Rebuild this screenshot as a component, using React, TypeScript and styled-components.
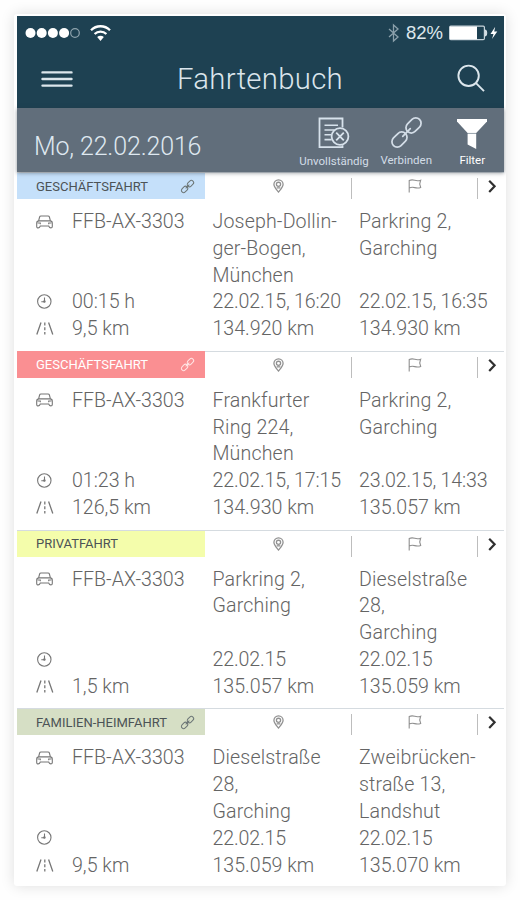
import React from "react";
import styled, { createGlobalStyle } from "styled-components";

const GlobalStyle = createGlobalStyle`
  * { box-sizing: border-box; }
  html, body { margin: 0; background: #fefefe; }
  body { font-family: Roboto, "Liberation Sans", sans-serif; font-weight: 300; }
  svg { display: block; flex: none; overflow: visible; }
`;

const Page = styled.div`
  height: 900px;
  padding: 14px;
  overflow: hidden;
`;

const Card = styled.main`
  width: 492px;
  height: 872px;
  padding: 2px 2px 0 3px;
  background: #fff;
  border-radius: 3px;
  box-shadow: 0 0 14px rgba(0, 0, 0, 0.13);
  overflow: hidden;
`;

const Header = styled.header`
  height: 92px;
  background: #1e4152;
  color: #dbe5ec;
`;

const StatusBar = styled.div`
  height: 33px;
  padding: 0 6px 0 8px;
  display: flex;
  justify-content: space-between;
  align-items: center;
`;

const StatusGroup = styled.div<{ $gap: number }>`
  display: flex;
  align-items: center;
  gap: ${(p) => p.$gap}px;
`;

const Percent = styled.span`
  font-family: "Liberation Sans", sans-serif;
  font-size: 18.5px;
  line-height: 20px;
  margin: 0 -1px 0 0;
  color: #dfe8ed;
`;

const TitleBar = styled.div`
  height: 59px;
  padding: 0 18px 0 24px;
  display: grid;
  grid-template-columns: 32px 1fr 30px;
  align-items: center;
`;

const Title = styled.h1`
  margin: 0 9px 0 0;
  font-size: 29.3px;
  line-height: 34px;
  font-weight: 300;
  letter-spacing: 0.3px;
  text-align: center;
`;

const Toolbar = styled.div`
  position: relative;
  z-index: 1;
  height: 64px;
  padding-left: 17px;
  display: flex;
  justify-content: space-between;
  background: #616e7b;
  color: #dfe8f0;
  box-shadow: 0 1px 4px rgba(40, 50, 60, 0.5);
`;

const DateLabel = styled.div`
  padding-top: 23px;
  font-size: 25px;
  line-height: 31px;
  letter-spacing: -0.15px;
`;

const Actions = styled.div`
  display: grid;
  grid-template-columns: 76px 68.5px 63.5px;
  padding-top: 9px;
`;

const Action = styled.div<{ $strong?: boolean }>`
  display: flex;
  flex-direction: column;
  align-items: center;
  gap: ${(p) => (p.$strong ? 4 : 5)}px;
  font-size: 11.5px;
  line-height: 14px;
  font-weight: 400;
  white-space: nowrap;
  color: ${(p) => (p.$strong ? "#fff" : "#d3dde7")};
`;

const Trip = styled.section`
  height: 178.8px;
  border-top: 1.5px solid #d5dbe0;
`;

const TripHeader = styled.div`
  height: 26px;
  display: grid;
  grid-template-columns: 188px 147px 126px 26px;
  color: #909090;
`;

const Tag = styled.div<{ $bg: string; $light?: boolean }>`
  display: flex;
  align-items: center;
  justify-content: space-between;
  margin-top: ${(p) => (p.$light ? -1 : 0)}px;
  padding: 0 11px 0 19px;
  background: ${(p) => p.$bg};
  color: ${(p) => (p.$light ? "#fff" : "#4c5356")};
  font-size: 13px;
  font-weight: 400;

  svg {
    color: ${(p) => (p.$light ? "#ffe3e3" : "#6d7777")};
  }
`;

const HeadCell = styled.div<{ $line?: boolean }>`
  display: flex;
  justify-content: center;
  padding: 6px 0 0 ${(p) => (p.$line ? 0 : 1)}px;
  background: ${(p) => (p.$line ? "linear-gradient(#bdbdbd, #bdbdbd) right 5px / 1px 21px no-repeat" : "none")};
`;

const TripBody = styled.div`
  display: grid;
  grid-template-columns: 36px 140.5px 146.5px 1fr;
  grid-template-rows: 80.4px 26.8px 26.8px;
  padding: 10px 0 0 19px;
  font-size: 19.6px;
  line-height: 26.8px;
  color: #646464;
`;

const Cell = styled.div<{ $spacing?: number }>`
  letter-spacing: ${(p) => p.$spacing ?? 0}px;
  white-space: pre;
`;

const IconCell = styled.div`
  height: 25.4px;
  display: flex;
  align-items: center;
  color: #777;
`;

const Signal = () => (
  <svg width="55" height="12" viewBox="0 0 55 12" fill="#fff">
    {[5.5, 16.7, 27.9, 39.1].map((x) => (
      <circle key={x} cx={x} cy="6" r="5" />
    ))}
    <circle cx="50" cy="6" r="4.3" fill="none" stroke="#8fa3ad" strokeWidth="1.2" />
  </svg>
);

const Wifi = () => (
  <svg width="21" height="18" viewBox="0 0 21 18" fill="none" stroke="#fff" strokeWidth="2.3">
    <path d="M1 6.2a13.4 13.4 0 0 1 19 0" />
    <path d="M4.6 10a8.4 8.4 0 0 1 11.8 0" />
    <path d="M7.2 13.1a4.7 4.7 0 0 1 6.6 0L10.5 17z" fill="#fff" stroke="none" />
  </svg>
);

const Bluetooth = () => (
  <svg width="11" height="18" viewBox="0 0 11 18" fill="none" stroke="#8ba0ab" strokeWidth="1.3">
    <path d="M1 5l9 8-4.5 4V1L10 5l-9 8" />
  </svg>
);

const Battery = () => (
  <svg width="49" height="16" viewBox="0 0 49 16">
    <rect x="0.6" y="1.1" width="34.8" height="13.6" rx="1.2" fill="none" stroke="#c7d3da" strokeWidth="1.2" />
    <rect x="1" y="1.5" width="27" height="12.8" fill="#fff" />
    <path d="M36.4 4.8c1.8.9 1.8 5.5 0 6.4z" fill="#dce5ea" stroke="#dce5ea" />
    <path d="M46.2 1.8L41.5 9h3L43 14l5.3-7.4h-3.1z" fill="#fff" />
  </svg>
);

const Menu = () => (
  <svg width="32" height="18" viewBox="0 0 32 18" stroke="#dce6ec" strokeWidth="2.4" strokeLinecap="round">
    <path d="M1.5 2.4h29M1.5 9h29M1.5 15.6h29" />
  </svg>
);

const Search = () => (
  <svg width="28" height="28" viewBox="0 0 28 28" fill="none" stroke="#dce6ec" strokeWidth="1.9">
    <circle cx="12.6" cy="10.8" r="10.2" />
    <path d="M20 18.2l8 8" />
  </svg>
);

const Incomplete = () => (
  <svg width="32" height="32" viewBox="0 0 32 32" fill="none" stroke="#d7e2ec" strokeWidth="1.8">
    <path d="M24.5 10.5V1.5H1.5V30.2h23v-2" />
    <path d="M6.5 8.2h13.5M6.5 13h10M6.5 17.8h6.5M6.5 22.6h7" strokeWidth="1.6" />
    <circle cx="22" cy="19.5" r="8.4" />
    <path d="M18.2 15.7l7.6 7.6M25.8 15.7l-7.6 7.6" />
  </svg>
);

const Chain = ({ size, weight }: { size: number; weight: number }) => (
  <svg width={size} height={size} viewBox="0 0 32 32" fill="none" stroke="currentColor" strokeWidth={weight} strokeLinecap="round">
    <g transform="rotate(-45 16 16)">
      <rect x="-3" y="10.5" width="17.5" height="11" rx="5.5" />
      <rect x="17.5" y="10.5" width="17.5" height="11" rx="5.5" />
      <path d="M10.500 16h11" />
    </g>
  </svg>
);

const Funnel = () => (
  <svg width="30" height="32" viewBox="0 0 30 32">
    <path d="M0 2h30v2.5L19.2 16H10.6L0 4.5z" fill="#fff" />
    <path d="M10.6 17h8.6v15l-8.6-4.6z" fill="#fff" />
    <path d="M10.6 16.4h8.6" stroke="#aeb8c1" strokeWidth="0.9" />
  </svg>
);

const Pin = () => (
  <svg width="11" height="14" viewBox="0 0 12 15" fill="none" stroke="currentColor" strokeWidth="1.4">
    <path d="M6 14C3.6 11.2 1 8.8 1 5.7a5 5 0 0 1 10 0C11 8.8 8.4 11.2 6 14z" />
    <circle cx="6" cy="5.7" r="2.3" />
    <path d="M4 9.5h4" />
  </svg>
);

const Flag = () => (
  <svg width="14" height="14" viewBox="0 0 14 14" fill="none" stroke="currentColor" strokeWidth="1.1">
    <path d="M1.2 13.5V1.5c2-.9 3.800-.8 5.600-.2s3.700.6 5.900-.1l-1 3.800 1 3.400c-2.200.8-4 .7-5.900.2s-3.600-.5-5.600.3" />
  </svg>
);

const Chevron = () => (
  <svg width="8" height="14" viewBox="0 0 8 14" fill="none" stroke="#303030" strokeWidth="2.2">
    <path d="M1.2 1.7L6.6 7.300l-5.400 5.600" />
  </svg>
);

const Car = () => (
  <svg width="17" height="14" viewBox="0 0 17 14" fill="none" stroke="currentColor" strokeWidth="1.1">
    <path d="M2.600 5.900L3.600 2c.2-.7.7-1 1.400-1h7c.7 0 1.200.3 1.400 1l1 3.900M3 5.900h11c1.500 0 2.300.9 2.300 2.300v3.200c0 1-.5 1.500-1.500 1.500s-1.600-.7-2.100-1.900H4.300c-.5 1.200-1.100 1.900-2.100 1.900S.7 12.400.7 11.400V8.200C.7 6.800 1.500 5.900 3 5.900z" />
    <path d="M1.500 8h2.800v1.200M15.500 8h-2.800v1.200" />
  </svg>
);

const Clock = () => (
  <svg width="17" height="16" viewBox="0 0 17 16" fill="none" stroke="currentColor" strokeWidth="1.1">
    <circle cx="8.300" cy="7.500" r="6.700" />
    <path d="M8.500 3.500v4.200H5.300" />
    <circle cx="8.400" cy="7.500" r="1.200" fill="currentColor" stroke="none" />
  </svg>
);

const Road = () => (
  <svg width="18" height="13" viewBox="0 0 18 13" fill="none" stroke="currentColor" strokeWidth="1.3">
    <path d="M5 .5L.8 12.500M12.600.5l4.200 12" />
    <path d="M8.800.5v12" strokeDasharray="3 1.7" />
  </svg>
);

type TripData = {
  tag: string;
  bg: string;
  light?: boolean;
  linked?: boolean;
  duration: string;
  distance: string;
  from: [string, string, string];
  to: [string, string, string];
};

const trips: TripData[] = [
  {
    tag: "GESCHÄFTSFAHRT",
    bg: "#c5e0fa",
    linked: true,
    duration: "00:15 h",
    distance: "9,5 km",
    from: ["Joseph-Dollin-\nger-Bogen,\nMünchen", "22.02.15, 16:20", "134.920 km"],
    to: ["Parkring 2,\nGarching", "22.02.15, 16:35", "134.930 km"],
  },
  {
    tag: "GESCHÄFTSFAHRT",
    bg: "#fa8f92",
    light: true,
    linked: true,
    duration: "01:23 h",
    distance: "126,5 km",
    from: ["Frankfurter\nRing 224,\nMünchen", "22.02.15, 17:15", "134.930 km"],
    to: ["Parkring 2,\nGarching", "23.02.15, 14:33", "135.057 km"],
  },
  {
    tag: "PRIVATFAHRT",
    bg: "#f4fdab",
    duration: "",
    distance: "1,5 km",
    from: ["Parkring 2,\nGarching", "22.02.15", "135.057 km"],
    to: ["Dieselstraße\n28,\nGarching", "22.02.15", "135.059 km"],
  },
  {
    tag: "FAMILIEN-HEIMFAHRT",
    bg: "#d6dfc5",
    linked: true,
    duration: "",
    distance: "9,5 km",
    from: ["Dieselstraße\n28,\nGarching", "22.02.15", "135.059 km"],
    to: ["Zweibrücken-\nstraße 13,\nLandshut", "22.02.15", "135.070 km"],
  },
];

const TripRow = ({ trip }: { trip: TripData }) => (
  <Trip>
    <TripHeader>
      <Tag $bg={trip.bg} $light={trip.light}>
        {trip.tag}
        {trip.linked && <Chain size={13} weight={2.5} />}
      </Tag>
      <HeadCell $line><Pin /></HeadCell>
      <HeadCell $line><Flag /></HeadCell>
      <HeadCell><Chevron /></HeadCell>
    </TripHeader>
    <TripBody>
      <IconCell><Car /></IconCell>
      <Cell>FFB-AX-3303</Cell>
      <Cell $spacing={0.15}>{trip.from[0]}</Cell>
      <Cell $spacing={0.15}>{trip.to[0]}</Cell>
      <IconCell><Clock /></IconCell>
      <Cell>{trip.duration}</Cell>
      <Cell $spacing={-0.15}>{trip.from[1]}</Cell>
      <Cell $spacing={-0.15}>{trip.to[1]}</Cell>
      <IconCell><Road /></IconCell>
      <Cell>{trip.distance}</Cell>
      <Cell>{trip.from[2]}</Cell>
      <Cell>{trip.to[2]}</Cell>
    </TripBody>
  </Trip>
);

export default function App() {
  return (
    <Page>
      <GlobalStyle />
      <Card>
        <Header>
          <StatusBar>
            <StatusGroup $gap={10}>
              <Signal />
              <Wifi />
            </StatusGroup>
            <StatusGroup $gap={7}>
              <Bluetooth />
              <Percent>82%</Percent>
              <Battery />
            </StatusGroup>
          </StatusBar>
          <TitleBar>
            <Menu />
            <Title>Fahrtenbuch</Title>
            <Search />
          </TitleBar>
        </Header>
        <Toolbar>
          <DateLabel>Mo, 22.02.2016</DateLabel>
          <Actions>
            <Action><Incomplete />Unvollständig</Action>
            <Action><Chain size={31} weight={1.8} />Verbinden</Action>
            <Action $strong><Funnel />Filter</Action>
          </Actions>
        </Toolbar>
        {trips.map((trip, i) => (
          <TripRow key={i} trip={trip} />
        ))}
      </Card>
    </Page>
  );
}
